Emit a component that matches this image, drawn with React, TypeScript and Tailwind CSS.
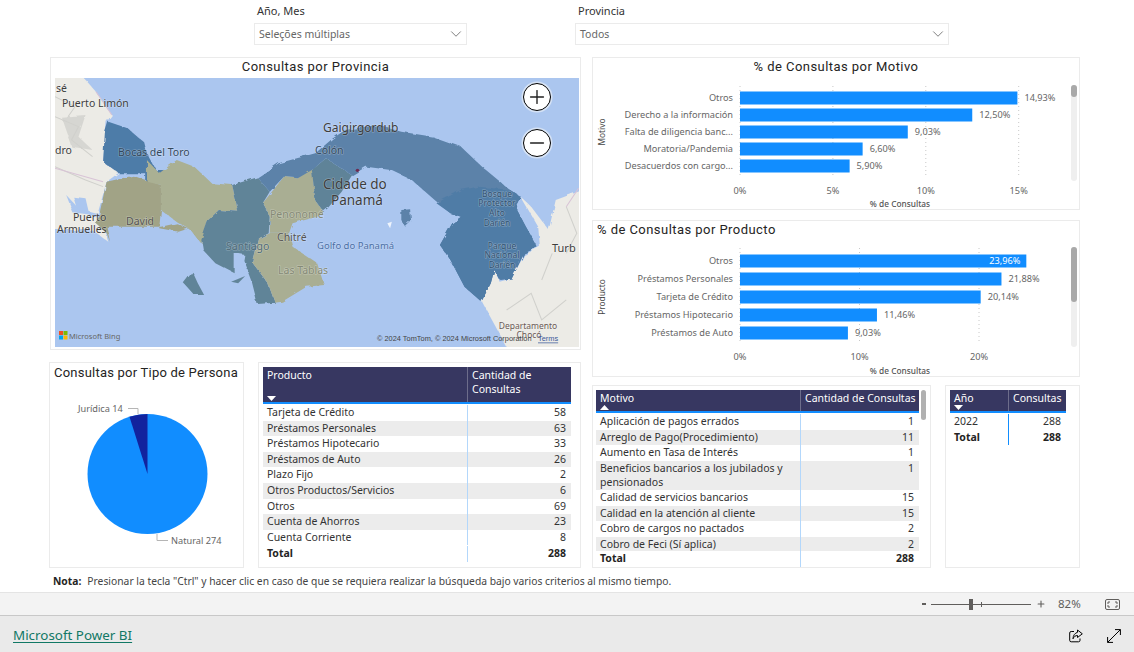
import React from 'react';
import { ChevronDown, Minus, Plus } from 'lucide-react';

const uiFont = "font-['Noto_Sans','Open_Sans',sans-serif]";
const titleCls = "font-['Roboto','Liberation_Sans',sans-serif] whitespace-nowrap text-[13px] font-normal leading-[17px] tracking-[0.45px] text-[#252423]";

type BarRow = { label: string; value: number; text: string; inside?: boolean };

const motivoBars: BarRow[] = [
  { label: 'Otros', value: 14.93, text: '14,93%' },
  { label: 'Derecho a la información', value: 12.5, text: '12,50%' },
  { label: 'Falta de diligencia banc...', value: 9.03, text: '9,03%' },
  { label: 'Moratoria/Pandemia', value: 6.6, text: '6,60%' },
  { label: 'Desacuerdos con cargo...', value: 5.9, text: '5,90%' },
];

const productoBars: BarRow[] = [
  { label: 'Otros', value: 23.96, text: '23,96%', inside: true },
  { label: 'Préstamos Personales', value: 21.88, text: '21,88%' },
  { label: 'Tarjeta de Crédito', value: 20.14, text: '20,14%' },
  { label: 'Préstamos Hipotecario', value: 11.46, text: '11,46%' },
  { label: 'Préstamos de Auto', value: 9.03, text: '9,03%' },
];

const productoRows = [
  ['Tarjeta de Crédito', '58'],
  ['Préstamos Personales', '63'],
  ['Préstamos Hipotecario', '33'],
  ['Préstamos de Auto', '26'],
  ['Plazo Fijo', '2'],
  ['Otros Productos/Servicios', '6'],
  ['Otros', '69'],
  ['Cuenta de Ahorros', '23'],
  ['Cuenta Corriente', '8'],
];

const motivoRows = [
  ['Aplicación de pagos errados', '1'],
  ['Arreglo de Pago(Procedimiento)', '11'],
  ['Aumento en Tasa de Interés', '1'],
  ['Beneficios bancarios a los jubilados y pensionados', '1'],
  ['Calidad de servicios bancarios', '15'],
  ['Calidad en la atención al cliente', '15'],
  ['Cobro de cargos no pactados', '2'],
  ['Cobro de Feci (Sí aplica)', '2'],
];

const Slicer = ({ label, value, width }: { label: string; value: string; width: string }) => (
  <div className={width}>
    <div className="h-[19px] pl-[3px] text-[11px] leading-[14px] text-[#333]">{label}</div>
    <div className="flex h-[22px] items-center justify-between border border-[#ebebeb] pl-[4px] pr-[1px] text-[10.5px] text-[#666]">
      <span className="pt-[2px]">{value}</span>
      <ChevronDown size={18} strokeWidth={1} className="text-[#555]" />
    </div>
  </div>
);

const BarChart = ({
  top, axisY, rows, ticks, scale, gridTop, gridBottom, tickY, titleY, axisLabel, axisLabelY, thumb, trackBottom, step,
}: {
  top: number; axisY: number; rows: BarRow[]; ticks: number[]; scale: number; gridTop: number; gridBottom: number;
  tickY: number; titleY: number; axisLabel: string; axisLabelY: number; thumb: number; trackBottom: number; step: number;
}) => (
  <svg className={`block h-full w-full ${uiFont}`} viewBox={`593 ${top} 486 ${gridBottom + 40 - top}`} preserveAspectRatio="xMinYMin slice">
    {ticks.map((t) => (
      <g key={t}>
        <line x1={740 + t * scale} x2={740 + t * scale} y1={gridTop} y2={gridBottom} stroke="#c8c8c8" strokeDasharray="1 3" />
        <text x={740 + t * scale} y={tickY} textAnchor="middle" dominantBaseline="central" fontSize="9.2" fill="#666">{t}%</text>
      </g>
    ))}
    {rows.map((r, i) => {
      const y = axisY + i * step;
      const end = 740 + r.value * scale;
      return (
        <g key={r.label}>
          <text x={733} y={y - 0.5} textAnchor="end" dominantBaseline="central" fontSize="9.2" fill="#666">{r.label}</text>
          <rect x={740} y={y - 6.5} width={r.value * scale} height={13} fill="#118dff" />
          <text
            x={r.inside ? end - 6 : end + 7}
            y={y - 0.5}
            textAnchor={r.inside ? 'end' : 'start'}
            dominantBaseline="central"
            fontSize="9.2"
            fill={r.inside ? '#fff' : '#666'}
          >
            {r.text}
          </text>
        </g>
      );
    })}
    <text x={900} y={titleY} textAnchor="middle" dominantBaseline="central" fontSize="8.3" fill="#555" fontWeight="500">% de Consultas</text>
    <text transform={`translate(601 ${axisLabelY}) rotate(-90)`} textAnchor="middle" dominantBaseline="central" fontSize="8.3" fill="#444">{axisLabel}</text>
    <rect x={1071} y={gridTop - 1} width={6} height={trackBottom - gridTop + 1} rx={3} fill="#efefef" />
    <rect x={1071} y={gridTop - 1} width={6} height={thumb} rx={3} fill="#a9a9a9" />
  </svg>
);

const SortArrow = ({ up, className }: { up?: boolean; className: string }) => (
  <svg width="9" height="5" viewBox="0 0 9 5" className={className}>
    <path d={up ? 'M0 5 L4.5 0 L9 5 Z' : 'M0 0 L9 0 L4.5 5 Z'} fill="#fff" />
  </svg>
);

const DataTable = ({
  rows, col1, col2, head1, head2, arrowUp, headerH, bodyH, sep, width,
}: {
  rows: string[][]; col1: string; col2: string; head1: string; head2: string; arrowUp?: boolean;
  headerH: string; bodyH: string; sep: string; width: string;
}) => (
  <div className={`${width} text-[10.5px] text-[#333]`}>
    <div className={`flex ${headerH} border-b-2 border-[#118dff] bg-[#373761] leading-[14px] text-white`}>
      <div className={`${col1} relative border-r border-[#6d6d8b] pl-[4px] pt-[1px]`}>
        {head1}
        <SortArrow up={arrowUp} className="absolute bottom-[1px] left-[4px]" />
      </div>
      <div className={`${col2} pl-[4px] pt-[1px]`}>{head2}</div>
    </div>
    <div className={`${bodyH} overflow-hidden pt-[1px]`}>
      {rows.map(([name, count], i) => (
        <div key={name} className={`flex ${i % 2 === 1 ? 'bg-[#ececec]' : ''}`}>
          <div className={`${col1} min-h-[15.6px] border-r ${sep} px-[4px] leading-[14.6px]`}>{name}</div>
          <div className={`${col2} pr-[5px] text-right leading-[14.6px]`}>{count}</div>
        </div>
      ))}
    </div>
    <div className="flex font-bold text-[#252423]">
      <div className={`${col1} h-[15.6px] border-r ${sep} px-[4px] leading-[14.6px]`}>Total</div>
      <div className={`${col2} pr-[5px] text-right leading-[14.6px]`}>288</div>
    </div>
  </div>
);

const labelCls = "[paint-order:stroke] font-['Noto_Sans',sans-serif]";

const MapLabel = ({ x, y, size = 10.5, fill = '#3d3d3d', anchor = 'start', children }: {
  x: number; y: number; size?: number; fill?: string; anchor?: 'start' | 'middle'; children: React.ReactNode;
}) => (
  <text x={x} y={y} fontSize={size} fill={fill} textAnchor={anchor} dominantBaseline="central" stroke="#ffffff" strokeOpacity="0.3" strokeWidth="1.2" className={labelCls}>
    {children}
  </text>
);

const PanamaMap = () => (
  <svg viewBox="0 0 524 269" className="block h-[269px] w-[524px] bg-[#abc6ef]">
    <defs>
      <filter id="rough" x="-5%" y="-5%" width="110%" height="110%">
        <feTurbulence type="fractalNoise" baseFrequency="0.035" numOctaves="3" seed="4" />
        <feDisplacementMap in="SourceGraphic" scale="14" />
      </filter>
    </defs>
    <g transform="scale(0.3509 0.3333) translate(-43 -234)">
      {/* vecinos */}
      <g filter="url(#rough)">
        <polygon fill="#ecebe6" points="20,210 105,210 160,275 205,345 190,365 180,485 225,518 190,545 165,640 110,625 75,585 95,640 170,650 195,725 150,690 20,690" />
        <polygon fill="#ecebe6" points="1370,590 1420,680 1425,740 1380,765 1345,835 1310,845 1295,810 1260,905 1340,1060 1560,1060 1560,565 1470,600 1450,690 1400,620" />
        <polygon fill="#abc6ef" points="95,590 130,595 140,640 105,625" />
        <polygon fill="#c8c8c4" points="60,350 130,345 110,410 150,450 90,440" opacity="0.6" />
      </g>
      <path d="M43 350 L110 380 L90 420 L150 470 M43 500 L130 540 L180 560 M43 290 L100 320 L80 350 M1500 620 L1530 700 L1500 760 M1330 930 L1400 880 L1430 960 L1500 900 M1460 760 L1430 840" fill="none" stroke="#d0d0cc" strokeWidth="3" />
      <path d="M160 275 L205 345 M43 505 L180 545 M1500 620 L1535 565" fill="none" stroke="#d8c3d6" strokeWidth="3" />
      <g filter="url(#rough)">
        {/* Bocas del Toro */}
        <polygon fill="#4e7ba8" points="195,365 250,385 300,430 310,470 330,510 360,510 350,535 300,545 300,520 225,520 180,485 185,400" />
        {/* Chiriqui */}
        <polygon fill="#a1a386" points="190,545 265,527 345,555 345,630 340,685 395,695 440,680 460,730 430,690 390,670 345,680 240,680 190,680 200,725 190,700 155,665 170,640" />
        {/* Ngabe Bugle */}
        <polygon fill="#aab093" points="305,480 340,520 390,480 440,500 490,550 548,555 565,635 510,630 480,660 460,730 430,690 390,665 345,630 345,555 305,545" />
        {/* Veraguas */}
        <polygon fill="#618498" points="548,555 620,532 655,575 635,610 655,650 652,700 625,715 585,765 555,760 555,820 500,790 465,750 460,720 480,660 510,630 565,635" />
        <polygon fill="#618498" points="585,750 625,715 607,790 650,850 670,908 620,912 605,850 580,780" />
        <polygon fill="#618498" points="410,850 435,815 450,850 468,885 440,885" />
        {/* Cocle, Herrera y Los Santos */}
        <polygon fill="#a9ae93" points="635,610 695,530 735,535 775,500 785,600 808,635 790,650 720,670 710,700 655,700 655,650" />
        <polygon fill="#a9ae93" points="655,700 710,700 720,740 790,790 810,855 760,860 690,905 670,908 650,850 607,790 625,715" />
        {/* Panama Oeste */}
        <polygon fill="#5f8398" points="775,510 815,475 890,525 860,575 820,625 808,635 785,600" />
        {/* Colon, Panama, Guna y Darien */}
        <polygon fill="#5b82a9" points="620,532 680,490 785,460 835,415 870,390 960,375 1030,395 1120,410 1200,440 1260,500 1340,570 1370,590 1355,620 1385,680 1418,742 1380,760 1345,835 1310,840 1295,810 1285,850 1258,905 1210,860 1170,780 1140,735 1175,670 1200,650 1170,640 1125,600 1060,540 1000,510 930,500 890,525 815,475 775,510 735,535 695,530 655,575" />
        <polygon fill="#4f7ba6" points="1130,610 1200,570 1250,560 1340,570 1370,590 1355,620 1385,680 1418,742 1380,760 1345,835 1310,840 1295,810 1285,850 1258,905 1210,860 1170,780 1140,735 1175,670 1200,650 1170,640" />
        <polygon fill="#5b82a9" points="1030,630 1055,628 1058,665 1042,682 1030,660" />
      </g>
      <circle cx="905" cy="511" r="5" fill="#6d2a52" />
      <polygon fill="#ffffff" opacity="0.8" points="990,670 1003,665 998,685" />
      <polygon fill="#618498" points="545,845 585,828 565,850" />
    </g>
    <MapLabel x={1} y={10}>sé</MapLabel>
    <MapLabel x={7} y={25}>Puerto Limón</MapLabel>
    <MapLabel x={0} y={72}>dro</MapLabel>
    <MapLabel x={63} y={74} fill="#33485c">Bocas del Toro</MapLabel>
    <MapLabel x={268} y={49} size={12}>Gaigirgordub</MapLabel>
    <MapLabel x={260} y={72} fill="#33485c">Colón</MapLabel>
    <MapLabel x={268} y={106} size={13.5}>Cidade do</MapLabel>
    <MapLabel x={276} y={122} size={13.5}>Panamá</MapLabel>
    <MapLabel x={18} y={139}>Puerto</MapLabel>
    <MapLabel x={2} y={151}>Armuelles</MapLabel>
    <MapLabel x={71} y={143} fill="#555">David</MapLabel>
    <MapLabel x={215} y={136} fill="#858a76">Penonomé</MapLabel>
    <MapLabel x={222} y={159} fill="#555">Chitré</MapLabel>
    <MapLabel x={171} y={168} fill="#4f6a78">Santiago</MapLabel>
    <MapLabel x={262} y={167} size={9.5} fill="#4a6ea6">Golfo do Panamá</MapLabel>
    <MapLabel x={223} y={192} fill="#858a76">Las Tablas</MapLabel>
    {['Bosque', 'Protector', 'Alto', 'Darién'].map((t, i) => (
      <MapLabel key={i} x={442} y={115 + i * 9.8} size={8.5} anchor="middle" fill="#33526f">{t}</MapLabel>
    ))}
    {['Parque', 'Nacional', 'Darién'].map((t, i) => (
      <MapLabel key={i} x={447} y={167 + i * 9.8} size={8.5} anchor="middle" fill="#33526f">{t}</MapLabel>
    ))}
    <MapLabel x={497} y={169} size={11}>Turb</MapLabel>
    <MapLabel x={473} y={247} size={8.5} anchor="middle" fill="#6b5a55">Departamento</MapLabel>
    <MapLabel x={474} y={256} size={8.5} anchor="middle" fill="#6b5a55">Chocó</MapLabel>
    <rect x="4" y="253" width="4" height="4" fill="#f25022" />
    <rect x="8.5" y="253" width="4" height="4" fill="#7fba00" />
    <rect x="4" y="257.5" width="4" height="4" fill="#00a4ef" />
    <rect x="8.5" y="257.5" width="4" height="4" fill="#ffb900" />
    <text x="14" y="257.5" fontSize="7.5" dominantBaseline="central" fill="#666" className="font-['Noto_Sans',sans-serif]">Microsoft Bing</text>
    <text x="322" y="260" fontSize="7.4" dominantBaseline="central" fill="#444" className="font-['Liberation_Sans',sans-serif]">© 2024 TomTom, © 2024 Microsoft Corporation</text>
    <text x="483" y="260" fontSize="7.4" dominantBaseline="central" fill="#3a5a9a" textDecoration="underline" className="font-['Liberation_Sans',sans-serif]">Terms</text>
  </svg>
);

const MapButton = ({ className, children }: { className: string; children: React.ReactNode }) => (
  <div className={`absolute flex h-[28px] w-[28px] items-center justify-center rounded-full border-[1.5px] border-black bg-white shadow-[0_0_0_1.5px_#d5e2f5] ${className}`}>
    {children}
  </div>
);

const PieCard = () => (
  <div className="h-[206px] w-[195px] border border-[#ebebeb] bg-white">
    <div className="h-[18px] whitespace-nowrap pl-[4px] pt-[1px] font-['Roboto','Liberation_Sans',sans-serif] text-[13px] font-normal leading-[17px] tracking-[0.22px] text-[#252423]">
      Consultas por Tipo de Persona
    </div>
    <svg viewBox="50 381 193 186" className={`block h-[186px] w-[193px] ${uiFont}`}>
      <circle cx="147.5" cy="474" r="60" fill="#118dff" />
      <path d="M147.5 474 L147.5 414 A60 60 0 0 0 129.5 416.8 Z" fill="#12239e" />
      <path d="M128 408.5 H138 V414" fill="none" stroke="#b5b5b5" />
      <path d="M157 534 V540.5 H168" fill="none" stroke="#b5b5b5" />
      <text x="78" y="408.5" fontSize="9.2" fill="#666" dominantBaseline="central">Jurídica 14</text>
      <text x="171" y="540.5" fontSize="9.2" fill="#666" dominantBaseline="central">Natural 274</text>
    </svg>
  </div>
);

export default function App() {
  return (
    <div className={`flex h-[652px] w-[1134px] flex-col overflow-hidden bg-white ${uiFont}`}>
      <div className="flex h-[57px] gap-[108px] pl-[254px] pt-[4px]">
        <Slicer label="Año, Mes" value="Seleções múltiplas" width="w-[213px]" />
        <Slicer label="Provincia" value="Todos" width="w-[374px]" />
      </div>

      <div className="flex gap-[11px] pl-[49px]">
        <div className="w-[532px]">
          <div className="ml-[1px] h-[293px] w-[531px] border border-[#ebebeb] bg-white">
            <div className={`${titleCls} h-[20px] text-center`}>Consultas por Provincia</div>
            <div className="relative ml-[4px] w-[524px]">
              <PanamaMap />
              <MapButton className="left-[468px] top-[5px]">
                <Plus size={22} strokeWidth={1.5} className="text-[#222]" />
              </MapButton>
              <MapButton className="left-[468px] top-[51px]">
                <Minus size={22} strokeWidth={1.5} className="text-[#222]" />
              </MapButton>
            </div>
          </div>
          <div className="mt-[12px] flex gap-[14px]">
            <PieCard />
            <div className="h-[206px] w-[323px] border border-[#ebebeb] bg-white p-[4px]">
              <DataTable
                rows={productoRows}
                width="w-[308px]"
                col1="w-[205px] shrink-0"
                col2="flex-1"
                head1="Producto"
                head2="Cantidad de Consultas"
                headerH="h-[37px]"
                bodyH="h-[142px]"
                sep="border-[#b3d7fb]"
              />
            </div>
          </div>
        </div>

        <div className="w-[488px]">
          <div className="flex h-[153px] flex-col border border-[#ebebeb] bg-white">
            <div className={`${titleCls} h-[27px] shrink-0 text-center`}>% de Consultas por Motivo</div>
            <div className="min-h-0 flex-1">
              <BarChart
                top={85} axisY={98} rows={motivoBars} ticks={[0, 5, 10, 15]} scale={18.58} gridTop={86} gridBottom={176} tickY={190}
                titleY={203} axisLabel="Motivo" axisLabelY={132} thumb={12} trackBottom={181} step={17}
              />
            </div>
          </div>
          <div className="mt-[10px] flex h-[157px] flex-col border border-[#ebebeb] bg-white">
            <div className={`${titleCls} h-[26px] shrink-0 pl-[4px]`}>% de Consultas por Producto</div>
            <div className="min-h-0 flex-1">
              <BarChart
                top={247} axisY={261} rows={productoBars} ticks={[0, 10, 20]} scale={11.95} gridTop={248} gridBottom={342} tickY={356.5}
                titleY={370} axisLabel="Producto" axisLabelY={297} thumb={55} trackBottom={347} step={18}
              />
            </div>
          </div>
          <div className="mt-[8px] flex gap-[14px]">
            <div className="relative h-[183px] w-[339px] border border-[#ebebeb] bg-white pl-[3px] pt-[4px]">
              <DataTable
                rows={motivoRows}
                width="w-[323px]"
                col1="w-[205px] shrink-0"
                col2="flex-1 whitespace-nowrap"
                head1="Motivo"
                head2="Cantidad de Consultas"
                arrowUp
                headerH="h-[23px]"
                bodyH="h-[138px]"
                sep="border-[#b3d7fb]"
              />
              <div className="absolute left-[328px] top-[4px] h-[30px] w-[5px] rounded-full bg-[#b0b0b0]" />
            </div>
            <div className="h-[183px] w-[135px] border border-[#ebebeb] bg-white pl-[4px] pt-[4px]">
              <DataTable
                rows={[['2022', '288']]}
                width="w-[116px]"
                col1="w-[59px] shrink-0"
                col2="flex-1 whitespace-nowrap"
                head1="Año"
                head2="Consultas"
                headerH="h-[23px]"
                bodyH="h-[16.6px]"
                sep="border-[#118dff]"
              />
            </div>
          </div>
        </div>
      </div>

      <div className="h-[24px] pl-[53px] pt-[6px] text-[10.3px] leading-[15px] text-[#444]">
        <span className="mr-[6px] font-bold text-[#252423]">Nota:</span>
        Presionar la tecla "Ctrl" y hacer clic en caso de que se requiera realizar la búsqueda bajo varios criterios al mismo tiempo.
      </div>

      <div className="flex h-[24px] items-center border-y border-t-[#e4e4e4] border-b-[#c8c8c8] bg-[#f3f3f3] pl-[922px] text-[#605e5c]">
        <span className="h-[2px] w-[4px] bg-[#605e5c]" />
        <div className="relative ml-[5px] h-[1px] w-[100px] bg-[#605e5c]">
          <span className="absolute left-[38px] top-[-5px] h-[11px] w-[4px] bg-[#605e5c]" />
          <span className="absolute left-[50px] top-[-2px] h-[5px] w-[1px] bg-[#605e5c]" />
        </div>
        <Plus size={10} strokeWidth={2.6} className="ml-[5px]" />
        <span className="ml-[12px] text-[11.5px] leading-none">82%</span>
        <svg width="15" height="11" viewBox="0 0 15 11" fill="none" stroke="#605e5c" className="ml-[24px]">
          <rect x="0.5" y="0.5" width="14" height="10" rx="1.5" />
          <path d="M3 5 V3 H5 M10 3 H12 V5 M12 6 V8 H10 M5 8 H3 V6" />
        </svg>
      </div>

      <div className="flex min-h-0 flex-1 items-center justify-between bg-[#eaeaea] pl-[13px] pr-[13px] pt-[3px]">
        <a className="text-[13.4px] leading-none text-[#117865] underline underline-offset-2">Microsoft Power BI</a>
        <div className="flex items-center gap-[24px] text-black">
          <svg width="14" height="14" viewBox="0 0 14 14" fill="none" stroke="currentColor" strokeWidth="1">
            <path d="M5 2.5 H2.2 A1.5 1.5 0 0 0 0.7 4 V11.3 A1.5 1.5 0 0 0 2.2 12.8 H9.5 A1.5 1.5 0 0 0 11 11.3 V9.5" />
            <path d="M8.5 1 L13.3 4.8 L8.5 8.5 V6.5 C6.5 6.5 5 7.5 4 9.8 C4 6.5 6 4 8.5 3.3 Z" />
          </svg>
          <svg width="14" height="14" viewBox="0 0 14 14" fill="none" stroke="currentColor" strokeWidth="1">
            <path d="M8 0.6 H13.4 V6 M13.4 0.6 L0.6 13.4 M0.6 8 V13.4 H6" />
          </svg>
        </div>
      </div>
    </div>
  );
}
